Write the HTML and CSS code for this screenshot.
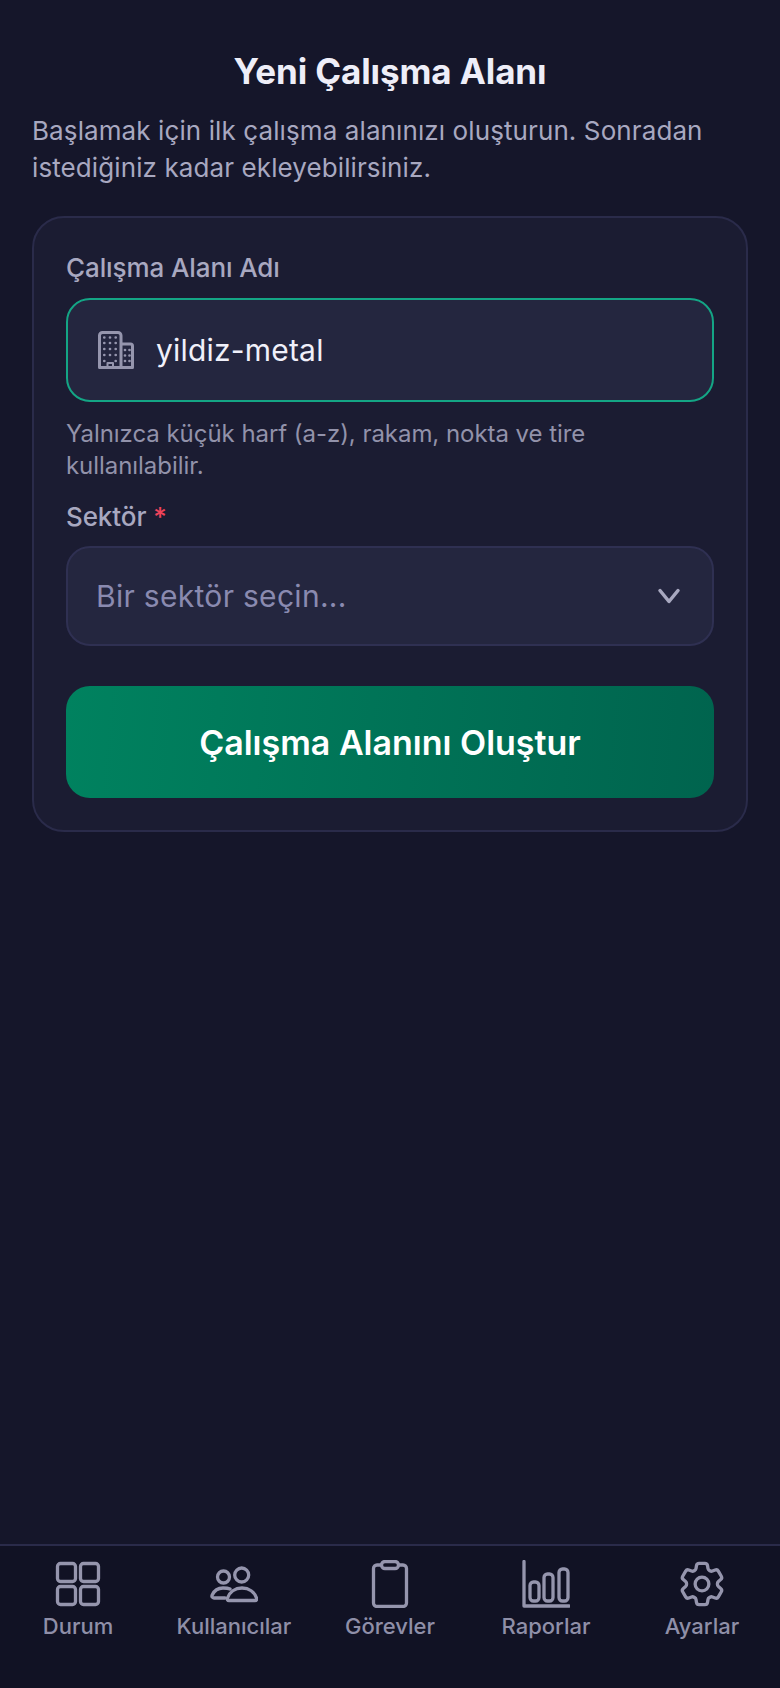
FILE: index.html
```html
<!DOCTYPE html>
<html lang="tr">
<head>
<meta charset="utf-8">
<title>Yeni Çalışma Alanı</title>
<link rel="stylesheet" href="styles.css">
</head>
<body>
<div class="app">
  <main class="main">
    <h1 class="title">Yeni Çalışma Alanı</h1>
    <p class="intro">Başlamak için ilk çalışma alanınızı oluşturun. Sonradan istediğiniz kadar ekleyebilirsiniz.</p>
    <form class="card">
      <div class="label label-first">Çalışma Alanı Adı</div>
      <div class="field field-active">
        <svg class="field-icon" viewBox="0 0 36 38" fill="none" stroke="currentColor" stroke-width="3" stroke-linejoin="round">
          <path d="M1.500 36.500V4.500a3 3 0 0 1 3-3h15.500a3 3 0 0 1 3 3v32z"/>
          <path d="M23 13h9.500a2 2 0 0 1 2 2v21.500H23"/>
          <path d="M1.500 36.500h33"/>
          <path d="M9.500 36v-4h5.500v4" stroke-width="2"/>
          <path stroke-width="2.700" stroke-linecap="round" d="M6.300 6.500h.01M12 6.500h.01M17.700 6.500h.01M6.300 12h.01M12 12h.01M17.700 12h.01M6.300 18h.01M12 18h.01M17.700 18h.01M6.300 24h.01M12 24h.01M17.700 24h.01M6.300 30h.01M17.700 30h.01M27 19h.01M31.500 19h.01M27 24.500h.01M31.500 24.500h.01M27 30h.01M31.500 30h.01"/>
        </svg>
        <span class="field-value">yildiz-metal</span>
      </div>
      <p class="hint">Yalnızca küçük harf (a-z), rakam, nokta ve tire kullanılabilir.</p>
      <div class="label">Sektör <span class="req">*</span></div>
      <div class="field">
        <span class="placeholder">Bir sektör seçin...</span>
        <svg class="chevron" viewBox="0 0 24 24" fill="none" stroke="currentColor" stroke-width="3.500" stroke-linecap="round" stroke-linejoin="round"><path d="M3 6.500l9 11 9-11"/></svg>
      </div>
      <button type="button" class="submit">Çalışma Alanını Oluştur</button>
    </form>
  </main>
  <nav class="nav">
    <div class="tab">
      <svg class="tab-icon" viewBox="0 0 48 48" fill="none" stroke="currentColor" stroke-width="3.300"><rect x="3.500" y="3.500" width="18" height="18" rx="3"/><rect x="26.500" y="3.500" width="18" height="18" rx="3"/><rect x="3.500" y="26.500" width="18" height="18" rx="3"/><rect x="26.500" y="26.500" width="18" height="18" rx="3"/></svg>
      <span>Durum</span>
    </div>
    <div class="tab">
      <svg class="tab-icon" viewBox="0 0 48 48" fill="none" stroke="currentColor" stroke-width="3.300" stroke-linejoin="round" stroke-linecap="round"><circle cx="13.500" cy="17" r="6"/><circle cx="31.700" cy="15" r="7"/><path d="M20 29C18 28 16 28 13 28 8 28 4 31 2.200 35c-.7 1.500 0 3 1.800 3h11"/><path d="M19 40.500c-1.500 0-2-1-1.500-2.500C19.500 32 25 28 32 28s12.500 4 14.500 10c.5 1.500 0 2.500-1.500 2.500z"/></svg>
      <span>Kullanıcılar</span>
    </div>
    <div class="tab">
      <svg class="tab-icon" viewBox="0 0 48 48" fill="none" stroke="currentColor" stroke-width="3.300" stroke-linejoin="round"><path d="M15 5h-4a3.500 3.500 0 0 0-3.500 3.500V43a3.500 3.500 0 0 0 3.500 3.500h26a3.500 3.500 0 0 0 3.500-3.500V8.500A3.500 3.500 0 0 0 37 5h-4"/><rect x="15.500" y="1.500" width="17" height="7" rx="3.500"/></svg>
      <span>Görevler</span>
    </div>
    <div class="tab">
      <svg class="tab-icon" viewBox="0 0 48 48" fill="none" stroke="currentColor" stroke-width="3.300" stroke-linecap="round" stroke-linejoin="round"><path d="M2 1.500V46h45"/><rect x="8" y="22" width="9" height="19" rx="3.500"/><rect x="22" y="14" width="9" height="27" rx="3.500"/><rect x="37" y="9" width="9" height="32" rx="3.500"/></svg>
      <span>Raporlar</span>
    </div>
    <div class="tab">
      <svg class="tab-icon" viewBox="1.500 1.500 21 21" fill="none" stroke="currentColor" stroke-width="1.450" stroke-linejoin="round"><path d="M9.594 3.940c.09-.542.56-.94 1.110-.94h2.593c.55 0 1.020.398 1.110.94l.213 1.281c.063.374.313.686.645.870.074.04.147.083.22.127.325.196.72.257 1.075.124l1.217-.456a1.125 1.125 0 0 1 1.370.49l1.296 2.247a1.125 1.125 0 0 1-.26 1.431l-1.003.827c-.293.241-.438.613-.43.992a7.723 7.723 0 0 1 0 .255c-.008.378.137.75.43.991l1.004.827c.424.35.534.955.26 1.430l-1.298 2.247a1.125 1.125 0 0 1-1.369.491l-1.217-.456c-.355-.133-.75-.072-1.076.124a6.470 6.470 0 0 1-.22.128c-.331.183-.581.495-.644.869l-.213 1.281c-.09.543-.56.94-1.110.94h-2.594c-.55 0-1.019-.398-1.110-.94l-.213-1.281c-.062-.374-.312-.686-.644-.87a6.520 6.520 0 0 1-.22-.127c-.325-.196-.72-.257-1.076-.124l-1.217.456a1.125 1.125 0 0 1-1.369-.49l-1.297-2.247a1.125 1.125 0 0 1 .26-1.431l1.004-.827c.292-.24.437-.613.43-.991a6.932 6.932 0 0 1 0-.255c.007-.38-.138-.751-.43-.992l-1.004-.827a1.125 1.125 0 0 1-.26-1.430l1.297-2.247a1.125 1.125 0 0 1 1.370-.491l1.216.456c.356.133.751.072 1.076-.124.072-.044.146-.086.22-.128.332-.183.582-.495.644-.869l.214-1.280z"/><path d="M15 12a3 3 0 1 1-6 0 3 3 0 0 1 6 0z"/></svg>
      <span>Ayarlar</span>
    </div>
  </nav>
</div>
</body>
</html>
```

FILE: styles.css
```css
* { box-sizing: border-box; }
html, body { margin: 0; padding: 0; }
body {
  background: #15162a;
  font-family: Inter, "Liberation Sans", sans-serif;
  color: #f0f0fa;
}
.app {
  height: 1688px;
  display: flex;
  flex-direction: column;
}
.main {
  flex: 1;
  padding: 51px 32px 0;
}
.title {
  margin: 0;
  text-align: center;
  font-size: 35px;
  line-height: 40px;
  letter-spacing: -0.1px;
  font-weight: 700;
  color: #eeeef8;
}
.intro {
  margin: 21px 0 0;
  font-size: 26px;
  line-height: 37px;
  letter-spacing: 0.1px;
  color: #a8a8c0;
}
.card {
  margin-top: 30px;
  padding: 32px;
  background: #1b1c32;
  border: 2px solid #2a2b4a;
  border-radius: 32px;
}
.label {
  font-size: 26px;
  line-height: 36px;
  letter-spacing: -0.1px;
  font-weight: 500;
  color: #a8a8c0;
  margin-top: 17px;
  margin-bottom: 11px;
}
.label-first { margin-top: 0; margin-bottom: 12px; }
.req { color: #f0435a; }
.field {
  height: 100px;
  display: flex;
  align-items: center;
  padding: 0 28px;
  background: #24263f;
  border: 2px solid #2f3052;
  border-radius: 24px;
}
.field-active {
  height: 104px;
  padding-left: 30px;
  border-color: #14a585;
}
.field-icon {
  width: 36px;
  height: 38px;
  color: #9595ad;
  flex: none;
  margin-right: 22px;
}
.field-value {
  font-size: 30px;
  letter-spacing: 0.2px;
  color: #f0f0fa;
}
.placeholder {
  flex: 1;
  font-size: 30px;
  letter-spacing: 0.3px;
  color: #8a8ab0;
}
.chevron {
  width: 24px;
  height: 24px;
  margin-right: 3px;
  color: #a8a8c0;
  flex: none;
}
.hint {
  margin: 16px 0 0;
  font-size: 24px;
  line-height: 32px;
  letter-spacing: -0.05px;
  color: #9292aa;
}
.submit {
  display: block;
  width: 100%;
  height: 112px;
  margin-top: 40px;
  border: 0;
  border-radius: 24px;
  background: linear-gradient(95deg, #00825f, #00644e);
  color: #fff;
  font-family: inherit;
  font-size: 34px;
  font-weight: 600;
}
.nav {
  height: 144px;
  flex: none;
  display: grid;
  grid-template-columns: repeat(5, 1fr);
  padding-top: 14px;
  background: #111224;
  border-top: 2px solid #2a2b4a;
}
.tab {
  display: flex;
  flex-direction: column;
  align-items: center;
  font-size: 22px;
  line-height: 28px;
  font-weight: 500;
  color: #8f8fa8;
}
.tab-icon {
  width: 48px;
  height: 48px;
  margin-bottom: 4px;
  color: #9595ad;
}
```
